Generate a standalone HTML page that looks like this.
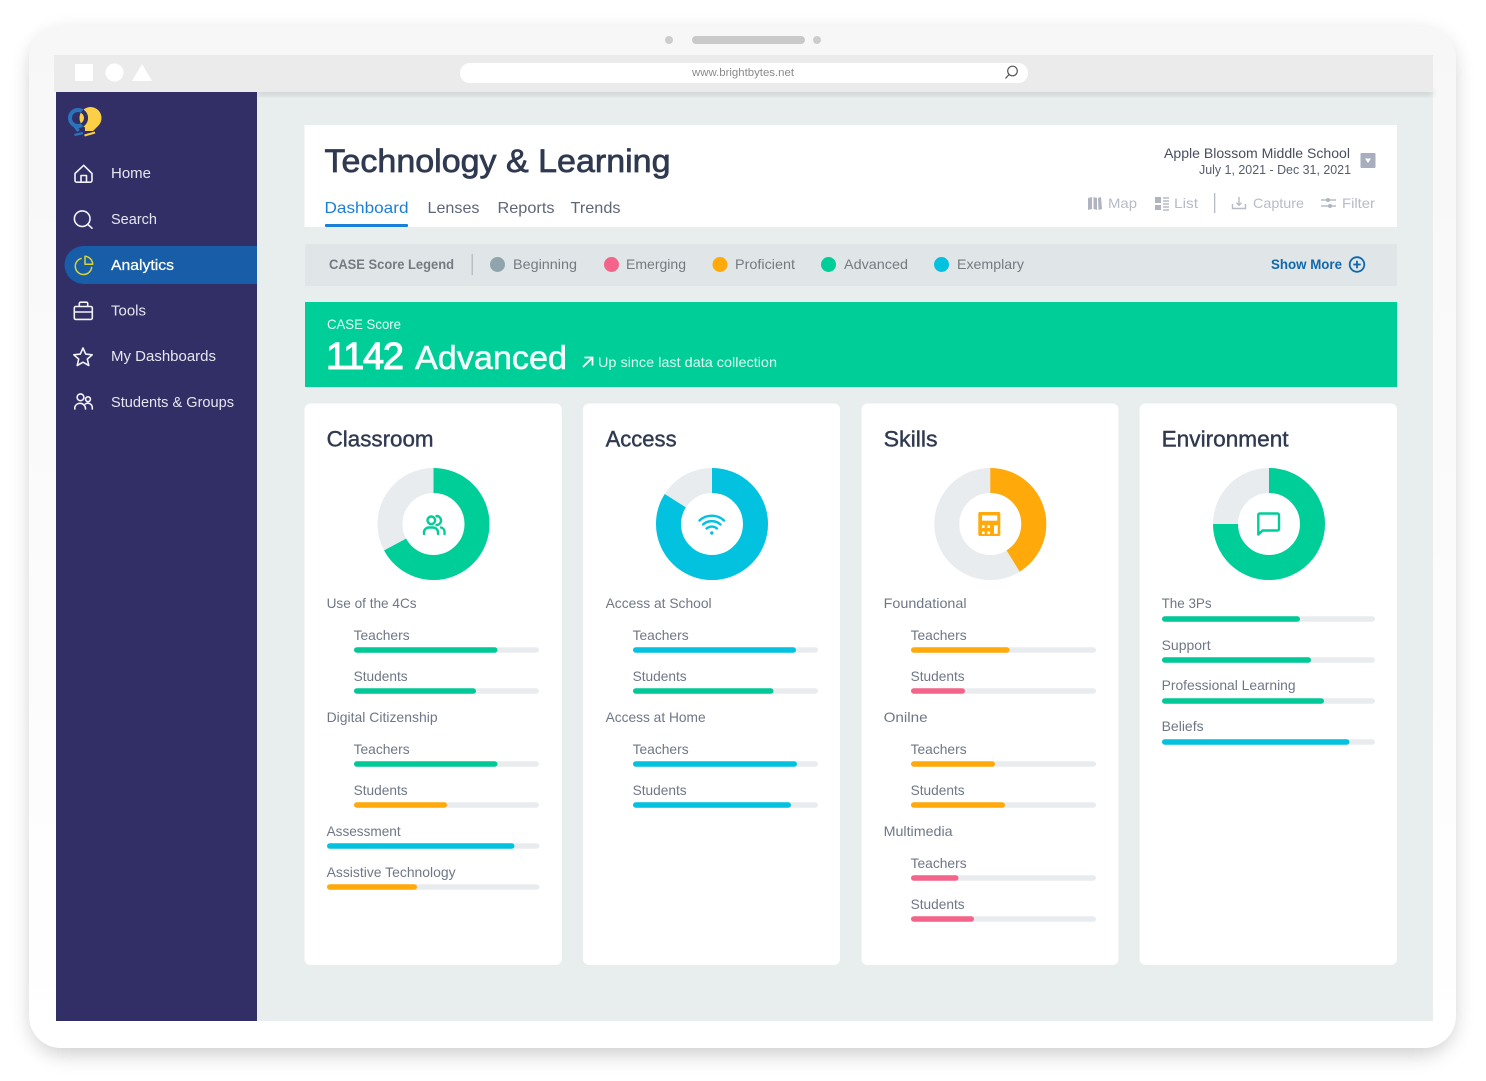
<!DOCTYPE html>
<html lang="en"><head><meta charset="utf-8"><title>Technology &amp; Learning</title>
<style>
html,body{margin:0;padding:0;background:#fff;width:1486px;height:1081px;overflow:hidden}
svg{display:block}
text{font-family:"Liberation Sans",sans-serif}
.nav{fill:#e6e6f0;font-size:14.5px}
.tab{fill:#5f6678;font-size:16px}
.tool{fill:#b7bbc7;font-size:14px}
.leg{fill:#747b80;font-size:14px}
.ttl{fill:#2f3950;font-size:22px;stroke:#2f3950;stroke-width:.4px}
.l{fill:#6f7786;font-size:14px}
.ic{fill:none;stroke:#f2f2f8;stroke-width:1.6;stroke-linecap:round;stroke-linejoin:round}
.tic{fill:none;stroke:#b7bbc7;stroke-width:1.4}
</style></head><body>
<svg width="1486" height="1081" viewBox="0 0 1486 1081" xmlns="http://www.w3.org/2000/svg">
<defs>
<filter id="sh" x="-10%" y="-10%" width="120%" height="120%"><feGaussianBlur stdDeviation="10"/></filter>
<filter id="sh2" x="-5%" y="-50%" width="110%" height="200%"><feGaussianBlur stdDeviation="3"/></filter>
<linearGradient id="dev" x1="0" y1="0" x2="0" y2="1"><stop offset="0" stop-color="#f7f7f7"/><stop offset=".6" stop-color="#fcfcfc"/><stop offset="1" stop-color="#fff"/></linearGradient>
<clipPath id="yc"><circle cx="90.500" cy="118" r="11"/></clipPath>
</defs>
<rect width="1486" height="1081" fill="#fff"/>
<rect x="31" y="34" width="1423" height="1020" rx="34" fill="#000" opacity=".2" filter="url(#sh)"/>
<rect x="29" y="26" width="1427" height="1022" rx="32" fill="url(#dev)"/>
<circle cx="669" cy="40" r="4" fill="#cdcdcd"/><rect x="692" y="36" width="113" height="8" rx="4" fill="#c9c9c9"/><circle cx="817" cy="40" r="4" fill="#cdcdcd"/>

<!-- content -->
<rect x="257" y="92" width="1176" height="929" fill="#e8edee"/>
<rect x="257" y="90" width="1176" height="5" fill="#000" opacity=".13" filter="url(#sh2)"/>

<!-- browser chrome -->
<rect x="54" y="55" width="1379" height="37" fill="#ebebeb"/>
<rect x="75" y="64" width="18" height="17" fill="#fff"/><circle cx="114.500" cy="72.500" r="9" fill="#fff"/><path d="M132 81 142 64 152 81Z" fill="#fff"/>
<rect x="460" y="63" width="568" height="20" rx="10" fill="#fff"/>
<text x="692" y="76" font-size="11" fill="#8a8a8a" textLength="102" lengthAdjust="spacingAndGlyphs">www.brightbytes.net</text>
<circle cx="1012.500" cy="71" r="4.800" fill="none" stroke="#555" stroke-width="1.200"/><path d="M1009 74.500 1005.500 78.500" stroke="#555" stroke-width="1.300" fill="none"/>

<!-- sidebar -->
<rect x="56" y="92" width="201" height="929" fill="#312f66"/>
<path d="M83.500 246H257V284H83.500A19 19 0 0 1 83.500 246Z" fill="#175da8"/>
<!-- logo -->
<circle cx="90.500" cy="118" r="11" fill="#fdcf46"/><path d="M85 126 85 131H93L98 126Z" fill="#fdcf46"/>
<circle cx="78" cy="118" r="8" fill="none" stroke="#2b73bd" stroke-width="4"/>
<circle cx="78" cy="118" r="8" fill="none" stroke="#312f66" stroke-width="4" clip-path="url(#yc)"/>
<path d="M75 126 78.500 131" stroke="#2b73bd" stroke-width="3.400" fill="none"/>
<path d="M74.500 135 83 133" stroke-width="2.200" fill="none" stroke="#2b73bd"/><path d="M84.500 135.500 95 132.500" stroke="#fdcf46" stroke-width="2.200" fill="none"/>
<!-- nav icons -->
<path class="ic" d="M75 173.500 83.700 165.300 92 173.500V180.500A1.700 1.700 0 0 1 90.300 182.200H76.700A1.700 1.700 0 0 1 75 180.500ZM81 182V175.500H86.500V182"/>
<circle class="ic" cx="82.200" cy="218.700" r="7.800"/><path class="ic" d="M87.800 224.400 92 228.200"/>
<g fill="none" stroke="#d8d336" stroke-width="1.500" stroke-linejoin="round"><path d="M81.700 258.300A8.200 8.200 0 1 0 91.700 266.800"/><path d="M85 256.300A8.300 8.300 0 0 1 92.700 264.300H85Z"/></g>
<path class="ic" d="M75.800 306.500H91A1.500 1.500 0 0 1 92.300 308V318A1.500 1.500 0 0 1 91 319.400H75.800A1.500 1.500 0 0 1 74.300 318V308A1.500 1.500 0 0 1 75.800 306.500ZM74.300 312H92.300M79.300 306V303.500A1.500 1.500 0 0 1 80.800 302.200H86.200A1.500 1.500 0 0 1 87.700 303.500V306"/>
<path class="ic" d="M83 348 85.700 354.100 92.200 354.800 87.300 359.100 88.800 365.500 83 362.200 77.200 365.500 78.700 359.100 73.800 354.800 80.300 354.100Z"/>
<circle class="ic" cx="80.500" cy="397.300" r="3.400"/><circle class="ic" cx="88" cy="399.200" r="2.400"/><path class="ic" d="M74.800 409V407A5.500 5.500 0 0 1 80.300 403.300 5.500 5.500 0 0 1 85.500 408.500V409M85.300 404A4.500 4.500 0 0 1 92.300 407.500V409"/>
<text class="nav" x="111" y="178" textLength="40" lengthAdjust="spacingAndGlyphs">Home</text>
<text class="nav" x="111" y="224" textLength="46" lengthAdjust="spacingAndGlyphs">Search</text>
<text class="nav" x="111" y="270" textLength="63" lengthAdjust="spacingAndGlyphs" style="fill:#fff;stroke:#fff;stroke-width:.25px">Analytics</text>
<text class="nav" x="111" y="315.500" textLength="35" lengthAdjust="spacingAndGlyphs">Tools</text>
<text class="nav" x="111" y="361" textLength="105" lengthAdjust="spacingAndGlyphs">My Dashboards</text>
<text class="nav" x="111" y="407" textLength="123" lengthAdjust="spacingAndGlyphs">Students &amp; Groups</text>

<!-- header -->
<rect x="304.500" y="125" width="1092.500" height="102" fill="#fff"/>
<text x="324.500" y="172" font-size="32" fill="#2f3950" stroke="#2f3950" stroke-width=".7" textLength="346" lengthAdjust="spacingAndGlyphs">Technology &amp; Learning</text>
<text class="tab" x="324.500" y="213" textLength="84" lengthAdjust="spacingAndGlyphs" style="fill:#1a7fd6">Dashboard</text>
<text class="tab" x="427.500" y="213" textLength="52" lengthAdjust="spacingAndGlyphs">Lenses</text>
<text class="tab" x="497.500" y="213" textLength="57" lengthAdjust="spacingAndGlyphs">Reports</text>
<text class="tab" x="570.500" y="213" textLength="50" lengthAdjust="spacingAndGlyphs">Trends</text>
<rect x="325" y="224" width="83" height="3" rx="1" fill="#1a7fd6"/>
<text x="1164" y="158" font-size="14" fill="#484e5e" textLength="186" lengthAdjust="spacingAndGlyphs">Apple Blossom Middle School</text>
<text x="1199" y="174" font-size="12.500" fill="#565c6c" textLength="152" lengthAdjust="spacingAndGlyphs">July 1, 2021 - Dec 31, 2021</text>
<rect x="1360.500" y="153" width="15" height="15" rx="1" fill="#a9aebf"/><path d="M1365 158.500H1371L1368 163Z" fill="#fff"/>
<!-- tools -->
<path d="M1088 198 1092 197V209L1088 210ZM1093.500 197 1097 198V210L1093.500 209ZM1098 198 1101 197 1102 209 1098.500 210Z" fill="#b0b4c1"/>
<text class="tool" x="1108" y="208" textLength="29" lengthAdjust="spacingAndGlyphs">Map</text>
<path d="M1155 197h6v6h-6zM1155 205h6v5h-6z" fill="#b0b4c1"/><path class="tic" d="M1163 198h6M1163 201h6M1163 204h6M1163 207h6M1163 210h6" stroke-width="1.100"/>
<text class="tool" x="1174" y="208" textLength="24" lengthAdjust="spacingAndGlyphs">List</text>
<rect x="1214" y="193" width="1.300" height="20" fill="#b5bac4"/>
<path class="tic" d="M1232.500 204V208.500H1245.500V204M1239 197V205M1236.500 202.800 1239 205.300 1241.500 202.800"/>
<text class="tool" x="1253" y="208" textLength="51" lengthAdjust="spacingAndGlyphs">Capture</text>
<path class="tic" d="M1321 200H1336M1321 206H1336"/><circle cx="1328" cy="200" r="2" fill="#b0b4c1"/><circle cx="1330" cy="206" r="2" fill="#b0b4c1"/>
<text class="tool" x="1342" y="208" textLength="33" lengthAdjust="spacingAndGlyphs">Filter</text>

<!-- legend -->
<rect x="305" y="244" width="1092" height="42" fill="#e0e5e7"/>
<text class="leg" x="329" y="269" textLength="125" lengthAdjust="spacingAndGlyphs" style="font-weight:700;font-size:13.500px">CASE Score Legend</text>
<rect x="471.500" y="254" width="1.500" height="21" fill="#b8c0c4"/>
<circle cx="497.500" cy="264.500" r="7.500" fill="#8fa4ad"/><text class="leg" x="513" y="269" textLength="64" lengthAdjust="spacingAndGlyphs">Beginning</text>
<circle cx="611.500" cy="264.500" r="7.500" fill="#f4648a"/><text class="leg" x="626" y="269" textLength="60" lengthAdjust="spacingAndGlyphs">Emerging</text>
<circle cx="720" cy="264.500" r="7.500" fill="#ffa90a"/><text class="leg" x="735" y="269" textLength="60" lengthAdjust="spacingAndGlyphs">Proficient</text>
<circle cx="828.500" cy="264.500" r="7.500" fill="#00ce98"/><text class="leg" x="844" y="269" textLength="64" lengthAdjust="spacingAndGlyphs">Advanced</text>
<circle cx="941.500" cy="264.500" r="7.500" fill="#03c2e0"/><text class="leg" x="957" y="269" textLength="67" lengthAdjust="spacingAndGlyphs">Exemplary</text>
<text x="1271" y="269" font-size="13.500" font-weight="700" fill="#0f68ad" textLength="71" lengthAdjust="spacingAndGlyphs">Show More</text>
<circle cx="1357" cy="264.500" r="7.300" fill="none" stroke="#0f68ad" stroke-width="1.800"/><path d="M1353.300 264.500H1360.700M1357 260.800V268.200" stroke="#0f68ad" stroke-width="1.800"/>

<!-- score band -->
<rect x="305" y="302" width="1092" height="85" fill="#00ce98"/>
<text x="327" y="329" font-size="14" fill="#e6fbf5" textLength="74" lengthAdjust="spacingAndGlyphs">CASE Score</text>
<text x="326" y="369" font-size="38" fill="#fff" stroke="#fff" stroke-width="1" textLength="78" lengthAdjust="spacing">1142</text>
<text x="415" y="369" font-size="33" fill="#f4fffb" stroke="#f4fffb" stroke-width=".5" textLength="152" lengthAdjust="spacingAndGlyphs">Advanced</text>
<path d="M583 367 592 358M584.500 357.500H592.500V365.500" fill="none" stroke="#fff" stroke-width="1.800"/>
<text x="598" y="367" font-size="14" fill="#dff9f2" textLength="179" lengthAdjust="spacingAndGlyphs">Up since last data collection</text>

<!-- cards -->
<rect x="304.500" y="403.500" width="257.300" height="561.500" rx="6" fill="#fff"/>
<rect x="583" y="403.500" width="257" height="561.500" rx="6" fill="#fff"/>
<rect x="861.500" y="403.500" width="257" height="561.500" rx="6" fill="#fff"/>
<rect x="1139.500" y="403.500" width="257.500" height="561.500" rx="6" fill="#fff"/>
<text class="ttl" x="326.600" y="446.500" textLength="107" lengthAdjust="spacingAndGlyphs">Classroom</text>
<text class="ttl" x="605.600" y="446.500" textLength="71" lengthAdjust="spacingAndGlyphs">Access</text>
<text class="ttl" x="883.600" y="446.500" textLength="54" lengthAdjust="spacingAndGlyphs">Skills</text>
<text class="ttl" x="1161.600" y="446.500" textLength="127" lengthAdjust="spacingAndGlyphs">Environment</text>

<!-- donuts -->
<g fill="none" stroke-width="25">
<circle cx="433.500" cy="524" r="43.500" stroke="#e8ecee"/>
<circle cx="433.500" cy="524" r="43.500" stroke="#00ce98" pathLength="100" stroke-dasharray="67.200 100" transform="rotate(-90 433.500 524)"/>
<circle cx="712" cy="524" r="43.500" stroke="#e8ecee"/>
<circle cx="712" cy="524" r="43.500" stroke="#03c2e0" pathLength="100" stroke-dasharray="84 100" transform="rotate(-90 712 524)"/>
<circle cx="990.300" cy="524" r="43.500" stroke="#e8ecee"/>
<circle cx="990.300" cy="524" r="43.500" stroke="#ffa90a" pathLength="100" stroke-dasharray="41.200 100" transform="rotate(-90 990.300 524)"/>
<circle cx="1269" cy="524" r="43.500" stroke="#e8ecee"/>
<circle cx="1269" cy="524" r="43.500" stroke="#00ce98" pathLength="100" stroke-dasharray="75 100" transform="rotate(-90 1269 524)"/>
</g>
<!-- donut icons -->
<g fill="none" stroke="#00ce98" stroke-width="2.400" stroke-linecap="round">
<circle cx="431.300" cy="520.300" r="3.800"/><path d="M424 534V532A5 5 0 0 1 429 527.500H433A5 5 0 0 1 438 532V534M436.500 516A4.500 4.500 0 0 1 436.500 525M441 527.500A4.500 4.500 0 0 1 444.500 532V534"/>
</g>
<g fill="none" stroke="#03c2e0" stroke-width="2.400" stroke-linecap="round">
<path d="M699.500 520.500A18 18 0 0 1 724 520.500M703 524.500A13 13 0 0 1 720.500 524.500M706.500 528.500A8 8 0 0 1 717 528.500"/>
</g><circle cx="711.800" cy="533" r="1.700" fill="#03c2e0"/>
<rect x="978.300" y="512" width="22" height="24" rx="1.500" fill="#ffa90a"/>
<rect x="982" y="515.300" width="15.300" height="5.400" fill="#fff"/>
<path d="M982 525.300h2.600v2.600h-2.600zM987.300 525.300h2.700v2.600h-2.700zM982 531.500h2.600v2.600h-2.600zM987.300 531.500h2.700v2.600h-2.700zM994 525.300h3.700v8.500h-3.700z" fill="#fff"/>
<path d="M1259.500 513.500H1277.500A1.500 1.500 0 0 1 1279 515V529A1.500 1.500 0 0 1 1277.500 530.500H1262.500L1258.300 534.500V515A1.500 1.500 0 0 1 1259.500 513.500Z" fill="none" stroke="#00ce98" stroke-width="2.400" stroke-linejoin="round"/>

<!-- Classroom rows -->
<text class="l" x="326.600" y="608" textLength="90" lengthAdjust="spacingAndGlyphs">Use of the 4Cs</text>
<text class="l" x="353.600" y="640" textLength="56" lengthAdjust="spacingAndGlyphs">Teachers</text>
<rect x="354" y="647.300" width="185" height="5.400" rx="2.700" fill="#e8ecee"/><rect x="354" y="647.300" width="143.500" height="5.400" rx="2.700" fill="#00c896"/>
<text class="l" x="353.600" y="681" textLength="54" lengthAdjust="spacingAndGlyphs">Students</text>
<rect x="354" y="688.300" width="185" height="5.400" rx="2.700" fill="#e8ecee"/><rect x="354" y="688.300" width="122" height="5.400" rx="2.700" fill="#00c896"/>
<text class="l" x="326.600" y="722" textLength="111" lengthAdjust="spacingAndGlyphs">Digital Citizenship</text>
<text class="l" x="353.600" y="754" textLength="56" lengthAdjust="spacingAndGlyphs">Teachers</text>
<rect x="354" y="761.300" width="185" height="5.400" rx="2.700" fill="#e8ecee"/><rect x="354" y="761.300" width="143.500" height="5.400" rx="2.700" fill="#00c896"/>
<text class="l" x="353.600" y="795" textLength="54" lengthAdjust="spacingAndGlyphs">Students</text>
<rect x="354" y="802.300" width="185" height="5.400" rx="2.700" fill="#e8ecee"/><rect x="354" y="802.300" width="93" height="5.400" rx="2.700" fill="#ffa90a"/>
<text class="l" x="326.600" y="836" textLength="74" lengthAdjust="spacingAndGlyphs">Assessment</text>
<rect x="327" y="843.300" width="212.500" height="5.400" rx="2.700" fill="#e8ecee"/><rect x="327" y="843.300" width="187.500" height="5.400" rx="2.700" fill="#03c2e0"/>
<text class="l" x="326.600" y="877" textLength="129" lengthAdjust="spacingAndGlyphs">Assistive Technology</text>
<rect x="327" y="884.300" width="212.500" height="5.400" rx="2.700" fill="#e8ecee"/><rect x="327" y="884.300" width="90" height="5.400" rx="2.700" fill="#ffa90a"/>

<!-- Access rows -->
<text class="l" x="605.600" y="608" textLength="106" lengthAdjust="spacingAndGlyphs">Access at School</text>
<text class="l" x="632.600" y="640" textLength="56" lengthAdjust="spacingAndGlyphs">Teachers</text>
<rect x="633" y="647.300" width="185" height="5.400" rx="2.700" fill="#e8ecee"/><rect x="633" y="647.300" width="163" height="5.400" rx="2.700" fill="#03c2e0"/>
<text class="l" x="632.600" y="681" textLength="54" lengthAdjust="spacingAndGlyphs">Students</text>
<rect x="633" y="688.300" width="185" height="5.400" rx="2.700" fill="#e8ecee"/><rect x="633" y="688.300" width="140.500" height="5.400" rx="2.700" fill="#00c896"/>
<text class="l" x="605.600" y="722" textLength="100" lengthAdjust="spacingAndGlyphs">Access at Home</text>
<text class="l" x="632.600" y="754" textLength="56" lengthAdjust="spacingAndGlyphs">Teachers</text>
<rect x="633" y="761.300" width="185" height="5.400" rx="2.700" fill="#e8ecee"/><rect x="633" y="761.300" width="164" height="5.400" rx="2.700" fill="#03c2e0"/>
<text class="l" x="632.600" y="795" textLength="54" lengthAdjust="spacingAndGlyphs">Students</text>
<rect x="633" y="802.300" width="185" height="5.400" rx="2.700" fill="#e8ecee"/><rect x="633" y="802.300" width="158" height="5.400" rx="2.700" fill="#03c2e0"/>

<!-- Skills rows -->
<text class="l" x="883.600" y="608" textLength="83" lengthAdjust="spacingAndGlyphs">Foundational</text>
<text class="l" x="910.600" y="640" textLength="56" lengthAdjust="spacingAndGlyphs">Teachers</text>
<rect x="911" y="647.300" width="185" height="5.400" rx="2.700" fill="#e8ecee"/><rect x="911" y="647.300" width="98.500" height="5.400" rx="2.700" fill="#ffa90a"/>
<text class="l" x="910.600" y="681" textLength="54" lengthAdjust="spacingAndGlyphs">Students</text>
<rect x="911" y="688.300" width="185" height="5.400" rx="2.700" fill="#e8ecee"/><rect x="911" y="688.300" width="54" height="5.400" rx="2.700" fill="#f4648a"/>
<text class="l" x="883.600" y="722" textLength="44" lengthAdjust="spacingAndGlyphs">Onilne</text>
<text class="l" x="910.600" y="754" textLength="56" lengthAdjust="spacingAndGlyphs">Teachers</text>
<rect x="911" y="761.300" width="185" height="5.400" rx="2.700" fill="#e8ecee"/><rect x="911" y="761.300" width="84" height="5.400" rx="2.700" fill="#ffa90a"/>
<text class="l" x="910.600" y="795" textLength="54" lengthAdjust="spacingAndGlyphs">Students</text>
<rect x="911" y="802.300" width="185" height="5.400" rx="2.700" fill="#e8ecee"/><rect x="911" y="802.300" width="94" height="5.400" rx="2.700" fill="#ffa90a"/>
<text class="l" x="883.600" y="836" textLength="69" lengthAdjust="spacingAndGlyphs">Multimedia</text>
<text class="l" x="910.600" y="868" textLength="56" lengthAdjust="spacingAndGlyphs">Teachers</text>
<rect x="911" y="875.300" width="185" height="5.400" rx="2.700" fill="#e8ecee"/><rect x="911" y="875.300" width="47.500" height="5.400" rx="2.700" fill="#f4648a"/>
<text class="l" x="910.600" y="909" textLength="54" lengthAdjust="spacingAndGlyphs">Students</text>
<rect x="911" y="916.300" width="185" height="5.400" rx="2.700" fill="#e8ecee"/><rect x="911" y="916.300" width="63" height="5.400" rx="2.700" fill="#f4648a"/>

<!-- Environment rows -->
<text class="l" x="1161.600" y="608" textLength="50" lengthAdjust="spacingAndGlyphs">The 3Ps</text>
<rect x="1162" y="616.300" width="213" height="5.400" rx="2.700" fill="#e8ecee"/><rect x="1162" y="616.300" width="138" height="5.400" rx="2.700" fill="#00c896"/>
<text class="l" x="1161.600" y="650" textLength="49" lengthAdjust="spacingAndGlyphs">Support</text>
<rect x="1162" y="657.300" width="213" height="5.400" rx="2.700" fill="#e8ecee"/><rect x="1162" y="657.300" width="149" height="5.400" rx="2.700" fill="#00c896"/>
<text class="l" x="1161.600" y="690" textLength="134" lengthAdjust="spacingAndGlyphs">Professional Learning</text>
<rect x="1162" y="698.300" width="213" height="5.400" rx="2.700" fill="#e8ecee"/><rect x="1162" y="698.300" width="162" height="5.400" rx="2.700" fill="#00c896"/>
<text class="l" x="1161.600" y="731" textLength="42" lengthAdjust="spacingAndGlyphs">Beliefs</text>
<rect x="1162" y="739.300" width="213" height="5.400" rx="2.700" fill="#e8ecee"/><rect x="1162" y="739.300" width="187.500" height="5.400" rx="2.700" fill="#03c2e0"/>
</svg>
</body></html>
